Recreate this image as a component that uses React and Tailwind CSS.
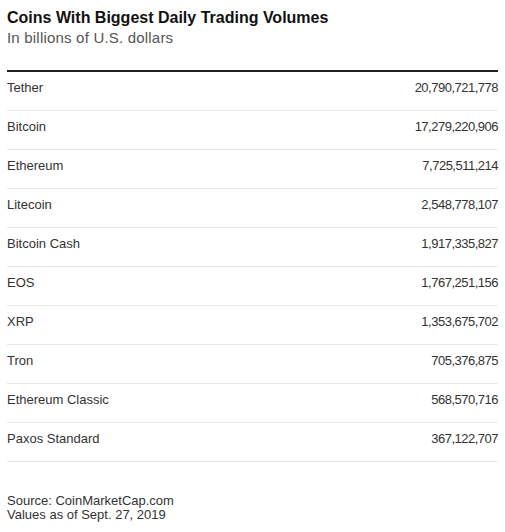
import React from 'react';

const coins = [
  { name: 'Tether', volume: '20,790,721,778' },
  { name: 'Bitcoin', volume: '17,279,220,906' },
  { name: 'Ethereum', volume: '7,725,511,214' },
  { name: 'Litecoin', volume: '2,548,778,107' },
  { name: 'Bitcoin Cash', volume: '1,917,335,827' },
  { name: 'EOS', volume: '1,767,251,156' },
  { name: 'XRP', volume: '1,353,675,702' },
  { name: 'Tron', volume: '705,376,875' },
  { name: 'Ethereum Classic', volume: '568,570,716' },
  { name: 'Paxos Standard', volume: '367,122,707' },
];

export default function App() {
  return (
    <div className="w-[505px] h-[532px] bg-white px-[7px] pt-[8px] font-['Liberation_Sans',Arial,sans-serif]">
      {/* header */}
      <h1 className="text-[16px] leading-[20px] font-bold text-[#111]">Coins With Biggest Daily Trading Volumes</h1>
      <p className="text-[15px] leading-[20px] tracking-[0.2px] text-[#555]">In billions of U.S. dollars</p>

      {/* table */}
      <div className="mt-[22px] border-t-2 border-[#222]">
        {coins.map((c) => (
          <div key={c.name} className="flex justify-between pt-[8px] pb-[14px] border-b border-[#e8e8e8] text-[13px] leading-[16px] text-[#333]">
            <span>{c.name}</span>
            <span className="tracking-[-0.5px]">{c.volume}</span>
          </div>
        ))}
      </div>

      {/* footer */}
      <div className="mt-[32px] text-[13px] leading-[14px] text-[#333]">
        <p>Source: CoinMarketCap.com</p>
        <p>Values as of Sept. 27, 2019</p>
      </div>
    </div>
  );
}
